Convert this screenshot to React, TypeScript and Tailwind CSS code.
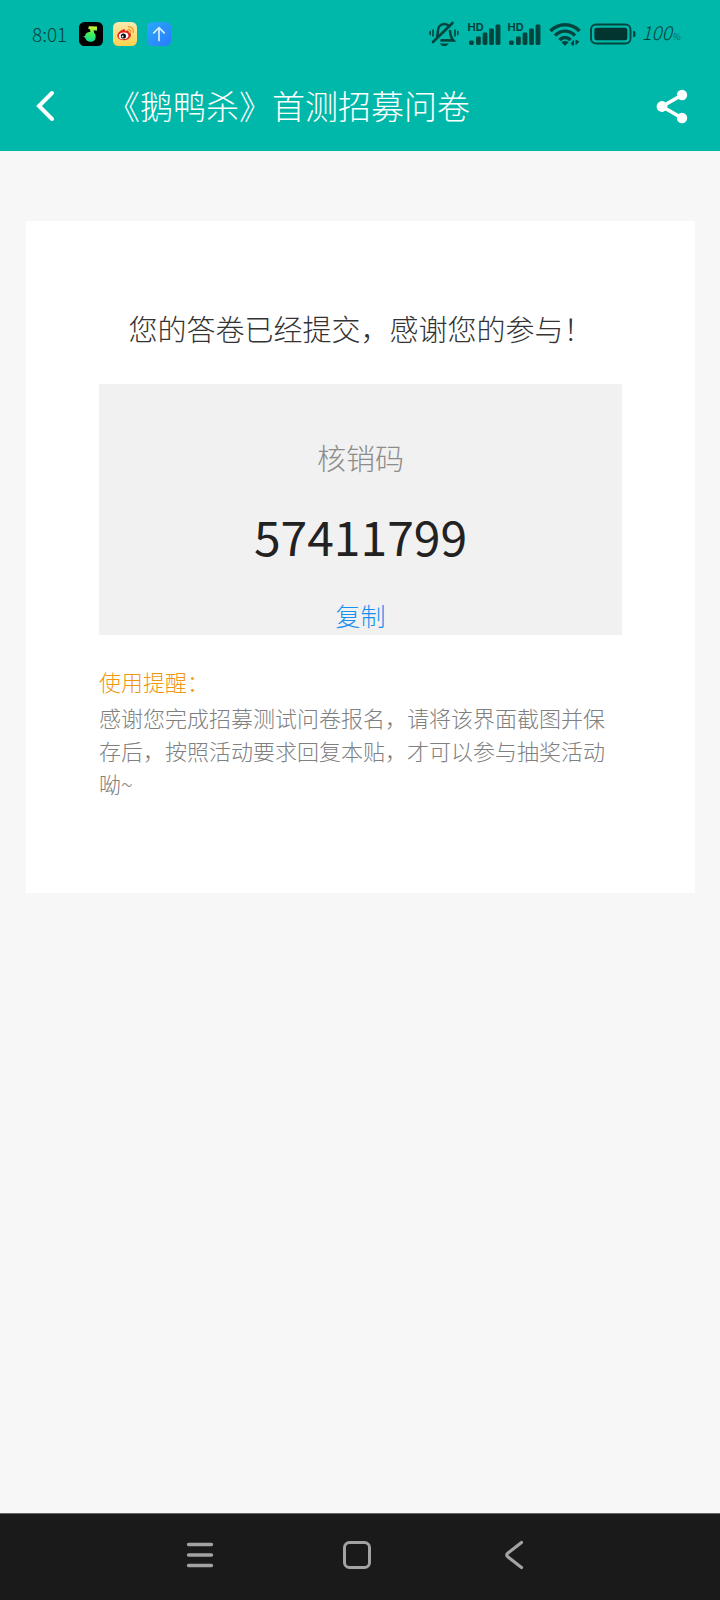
import { useId } from "react";

const CODE = "57411799";

export default function App() {
  return (
    <div className="flex min-h-screen flex-col bg-[#f7f7f7] font-['Noto_Sans_CJK_SC',sans-serif] font-light">
      <header className="bg-[#00b8a9]">
        <StatusBar />
        <TitleBar title="《鹅鸭杀》首测招募问卷" />
      </header>

      <main className="flex-1 pt-[70px] pr-[25px] pb-10 pl-[26px]">
        <section className="bg-white px-[73px] pt-[87px] pb-[93px]">
          <h2 className="text-center text-[29px] leading-10 whitespace-nowrap text-[#333]">
            您的答卷已经提交，感谢您的参与！
          </h2>
          <RedeemCode code={CODE} />
          <h3 className="mt-[30px] text-[22px] leading-[33px] text-[#f0970f]">使用提醒：</h3>
          <p className="mt-[3px] text-[22px] leading-[33px] text-[#808080]">
            感谢您完成招募测试问卷报名，请将该界面截图并保存后，按照活动要求回复本贴，才可以参与抽奖活动呦~
          </p>
        </section>
      </main>

      <SystemNav />
    </div>
  );
}

function StatusBar() {
  return (
    <div className="flex h-[62px] items-center justify-between pt-1.5 pr-10 pl-8 text-[#04443f]">
      <div className="flex items-center gap-[10px]">
        <span className="mr-0.5 text-[19px] leading-6">8:01</span>
        <MusicAppIcon />
        <WeiboAppIcon />
        <UploadAppIcon />
      </div>
      <div className="flex items-center">
        <MutedBellIcon />
        <SignalIcon className="ml-2" />
        <SignalIcon className="ml-[6px]" />
        <WifiIcon />
        <BatteryIcon />
        <span className="ml-[5px] text-[19px] leading-6 italic">
          100<span className="text-[9px]">%</span>
        </span>
      </div>
    </div>
  );
}

function TitleBar({ title }: { title: string }) {
  return (
    <div className="flex h-[89px] items-center pr-8 pb-px pl-[34px] text-white">
      <button type="button" aria-label="返回" className="shrink-0">
        <svg width="24" height="32" viewBox="0 0 24 32" fill="none" stroke="currentColor" strokeWidth="4" strokeLinecap="round" strokeLinejoin="miter">
          <path d="M18 3 5 16l13 13" />
        </svg>
      </button>
      <h1 className="ml-[49px] flex-1 pb-0.5 text-[33px] leading-[50px] whitespace-nowrap">{title}</h1>
      <button type="button" aria-label="分享" className="shrink-0">
        <svg width="32" height="36" viewBox="0 0 32 36" fill="currentColor">
          <path d="M26 7 6 18.500 26 30" fill="none" stroke="currentColor" strokeWidth="3.600" />
          <circle cx="26" cy="7" r="5.200" />
          <circle cx="6" cy="18.500" r="5.400" />
          <circle cx="26" cy="30" r="5.200" />
        </svg>
      </button>
    </div>
  );
}

function RedeemCode({ code }: { code: string }) {
  return (
    <div className="mt-9 flex flex-col items-center bg-[#f1f1f1] pt-[53px] pb-0.5">
      <span className="text-[29px] leading-10 text-[#8c8c8c]">核销码</span>
      <strong className="mt-[26px] text-5xl leading-[64px] font-normal text-[#222]">{code}</strong>
      <button
        type="button"
        className="mt-[30px] text-[25px] leading-9 text-[#1890f0]"
        onClick={() => void navigator.clipboard?.writeText(code)}
      >
        复制
      </button>
    </div>
  );
}

function SystemNav() {
  return (
    <nav className="flex h-[87px] items-center justify-center gap-[117px] border-t border-[#666] bg-[#1a1a1a] pr-1.5 pb-1 text-[#a3a3a3]">
      <button type="button" aria-label="最近任务">
        <svg width="40" height="32" viewBox="0 0 40 32" fill="none" stroke="currentColor" strokeWidth="3.400" strokeLinecap="round">
          <path d="M8.500 5.500h23M8.500 16h23M8.500 26.500h23" />
        </svg>
      </button>
      <button type="button" aria-label="主屏幕">
        <svg width="40" height="32" viewBox="0 0 40 32" fill="none" stroke="currentColor" strokeWidth="3">
          <rect x="7.500" y="3.500" width="25" height="25" rx="5" />
        </svg>
      </button>
      <button type="button" aria-label="返回上一级">
        <svg width="40" height="32" viewBox="0 0 40 32" fill="none" stroke="currentColor" strokeWidth="3.200" strokeLinecap="round">
          <path d="M27.500 3.500 14 14q-2.500 2 0 4l13.500 10.500" />
        </svg>
      </button>
    </nav>
  );
}

function MusicAppIcon() {
  const id = useId();
  return (
    <svg width="24" height="24" viewBox="0 0 24 24">
      <linearGradient id={id} x1="0" y1="0" x2="0" y2="1">
        <stop offset="0" stopColor="#d8f52c" />
        <stop offset="0.500" stopColor="#45ef58" />
        <stop offset="1" stopColor="#12dc9c" />
      </linearGradient>
      <rect width="24" height="24" rx="5.500" fill="#000" />
      <path
        d="M9.800 4.200 18 4.500v4h-3.400l.6 2.600c1.200 1 1.700 2.200 1.400 3.600.2 3-1.900 5-4.900 5-2.900 0-4.900-1.500-5.500-4l-2-1.200 1.900-.6c.2-1.900 1.400-3.200 3.100-3.700l2.200-.5-.4-2.400-1.700-.4Z"
        fill={`url(#${id})`}
      />
    </svg>
  );
}

function WeiboAppIcon() {
  const id = useId();
  return (
    <svg width="24" height="24" viewBox="0 0 24 24">
      <linearGradient id={id} x1="0" y1="0" x2="0" y2="1">
        <stop offset="0" stopColor="#f8e9b0" />
        <stop offset="1" stopColor="#ffd24c" />
      </linearGradient>
      <rect width="24" height="24" rx="5.500" fill={`url(#${id})`} />
      <path
        d="M10 7.500c1.500-.6 2.400.1 2 1.600 2-1 4-.8 3.700 1.200 2.300.6 2.800 2.300 1.900 4.200-1.200 2.500-4 3.800-7.100 3.700-3.600-.1-6.300-2-6.200-4.600.1-2.400 2.900-5.200 5.700-6.100Z"
        fill="#e0251b"
      />
      <ellipse cx="10.600" cy="13.800" rx="4.800" ry="3.300" fill="#fff" transform="rotate(-8 10.600 13.800)" />
      <circle cx="10.400" cy="14" r="2.600" fill="#111" />
      <circle cx="9.600" cy="14.500" r="0.900" fill="#fff" />
      <path d="M15.200 7.600c1.600-.2 2.700.9 2.400 2.500M15.200 4.800c3.300-.3 5.600 2.100 5 5.500" fill="none" stroke="#f39a2b" strokeWidth="1.300" strokeLinecap="round" />
    </svg>
  );
}

function UploadAppIcon() {
  const id = useId();
  return (
    <svg width="24" height="24" viewBox="0 0 24 24">
      <linearGradient id={id} x1="0" y1="0" x2="1" y2="1">
        <stop offset="0" stopColor="#27a9f8" />
        <stop offset="1" stopColor="#2b7bff" />
      </linearGradient>
      <rect width="24" height="24" rx="5.500" fill={`url(#${id})`} />
      <path d="M12 18.500V6M6.800 10.800 12 5.600l5.200 5.200" fill="none" stroke="#d8efff" strokeWidth="1.700" strokeLinecap="round" />
    </svg>
  );
}

function MutedBellIcon() {
  return (
    <svg width="30" height="26" viewBox="0 0 30 26" fill="none" stroke="currentColor" strokeWidth="2.600" strokeLinecap="round">
      <path d="M8.200 15c.5-1.200.6-2.400.6-4 0-4.800 2.400-8 6.400-8 1.500 0 2.800.5 3.800 1.300M21 10c.3 3.800.8 6.600 3.300 9.400H12.500" />
      <path d="M4 21 23.500 2" />
      <path d="M12 23.200c1.500 1.800 4.800 1.800 6.500 0Z" fill="currentColor" strokeWidth="1.200" />
      <path d="M1.200 10.500v3M4 9v6M26 9v6M28.800 10.500v3" strokeWidth="1.600" />
    </svg>
  );
}

function SignalIcon({ className }: { className?: string }) {
  return (
    <span className={`relative h-6 w-[34px] ${className ?? ""}`}>
      <svg width="34" height="24" viewBox="0 0 34 24" fill="currentColor">
        <rect x="2" y="18.500" width="4.800" height="4.500" rx="1.400" />
        <rect x="9" y="14.500" width="4.800" height="8.500" rx="1.400" />
        <rect x="15.600" y="10.500" width="4.800" height="12.500" rx="1.400" />
        <rect x="22.100" y="6.500" width="4.800" height="16.500" rx="1.400" />
        <rect x="28.600" y="2.500" width="4.800" height="20.500" rx="1.400" />
      </svg>
      <span className="absolute top-0 left-0 font-['Inter',sans-serif] text-[11px] leading-[10px] font-bold">HD</span>
    </span>
  );
}

function WifiIcon() {
  return (
    <svg className="ml-2" width="32" height="24" viewBox="0 0 32 24" fill="none" stroke="currentColor" strokeWidth="3.400">
      <path d="M1.500 9C9.500.700 22.500.700 30.500 9M6 13.600c5.800-6 14.200-6 20 0M10.400 18c3.300-3.300 7.900-3.300 11.200 0" />
      <path d="M12.300 20.200q3.700-2.600 7.400 0L16 23.800Z" fill="currentColor" stroke="none" />
      <path d="M21.500 21.500 25 17.500v6h-1.500ZM26.500 17.500v6l4-4Z" fill="currentColor" stroke="none" />
    </svg>
  );
}

function BatteryIcon() {
  return (
    <svg className="ml-[9px]" width="46" height="22" viewBox="0 0 46 22" fill="none">
      <rect x="1" y="1.500" width="39.500" height="19" rx="5" stroke="currentColor" strokeWidth="1.900" />
      <rect x="4.300" y="4.700" width="33" height="12.600" rx="2.200" fill="#023430" />
      <path d="M43 8h1q1.500 0 1.500 1.500v3q0 1.500-1.500 1.500h-1Z" fill="currentColor" />
    </svg>
  );
}
